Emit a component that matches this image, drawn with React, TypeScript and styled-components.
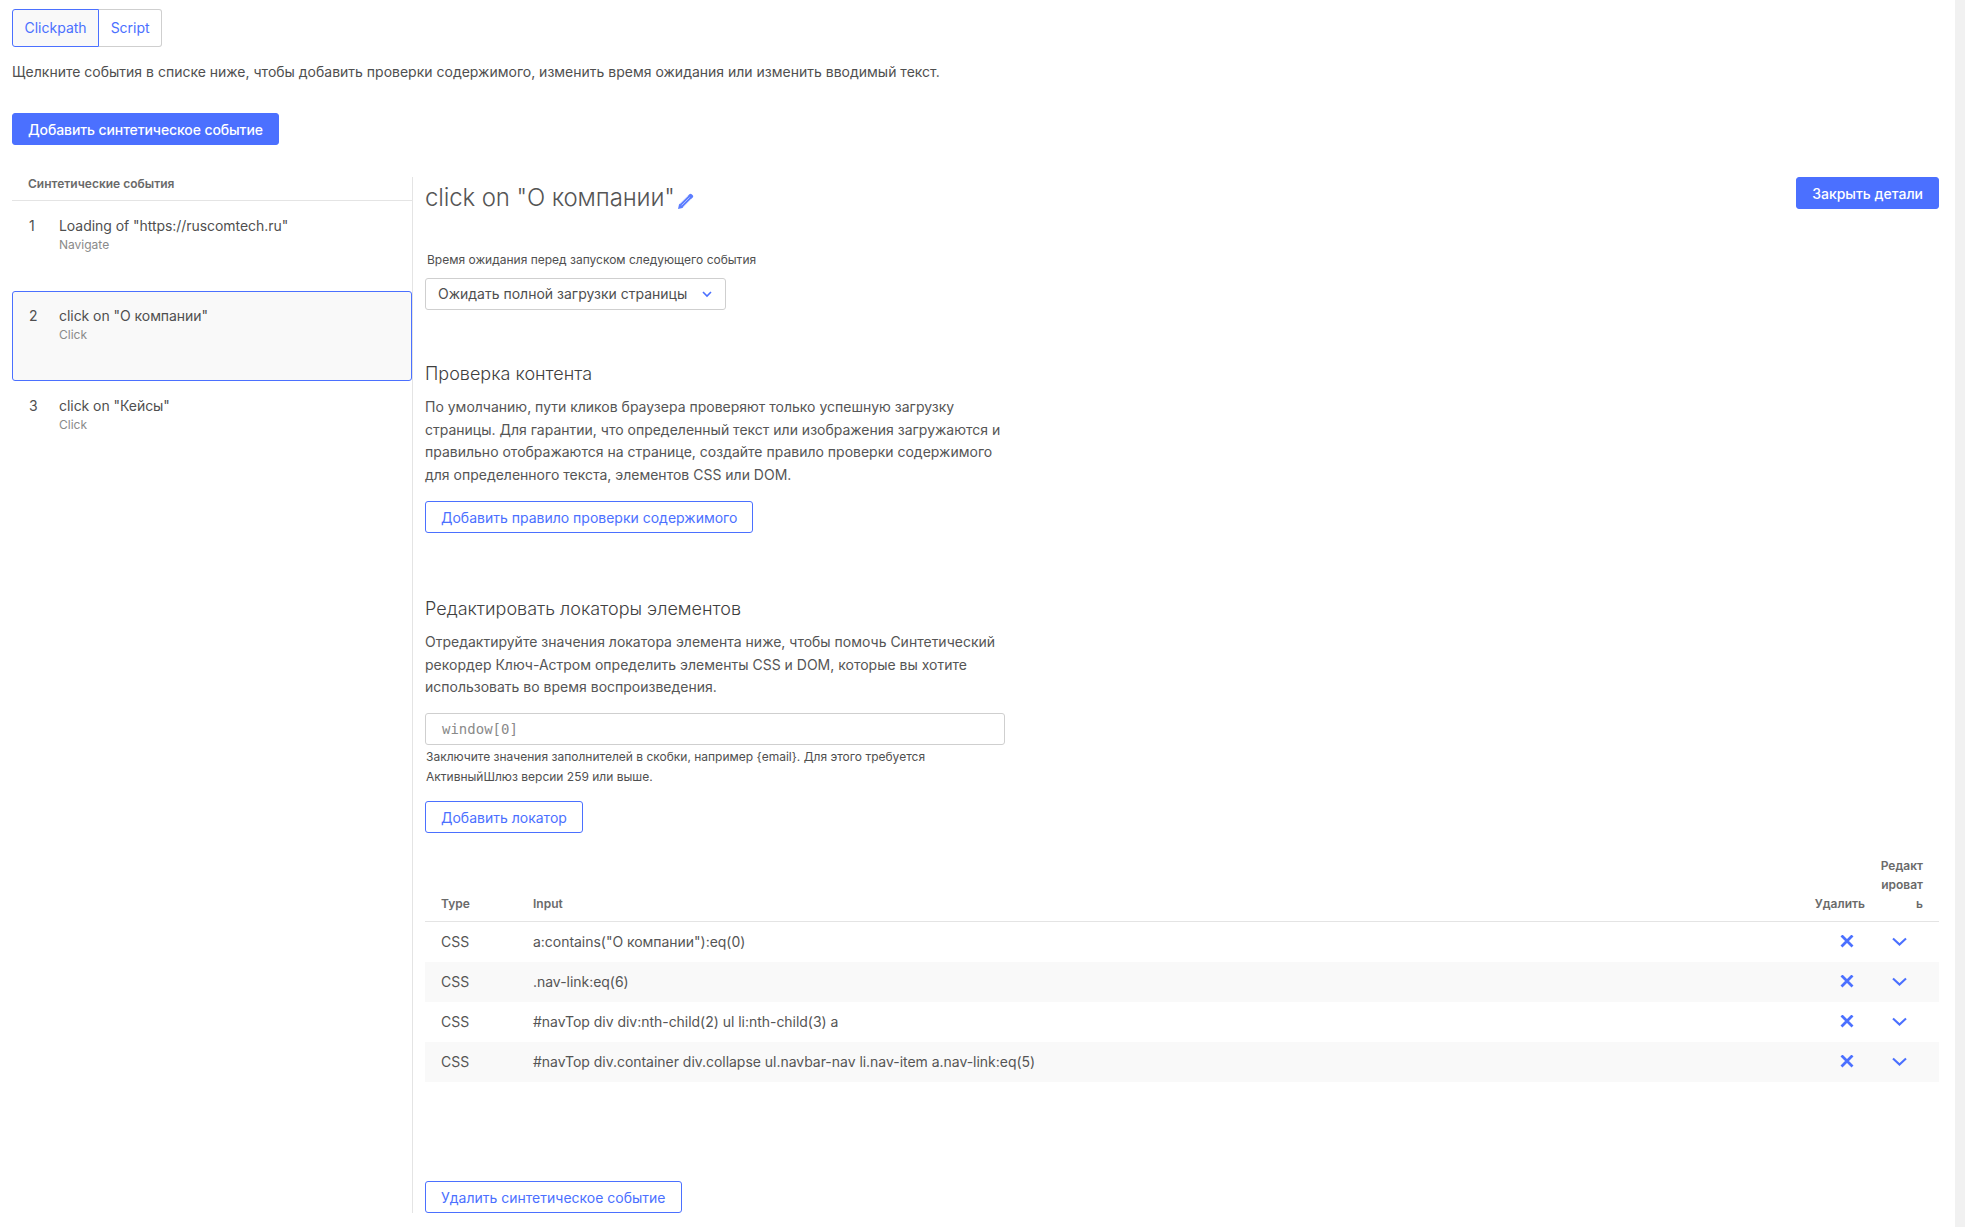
import React from "react";
import styled, { createGlobalStyle } from "styled-components";

const BLUE = "#4b70ff";
const TEXT = "#4f4f4f";

const Global = createGlobalStyle`
  html, body { margin: 0; padding: 0; background: #fff; }
  body { font-family: Inter, "Noto Sans", sans-serif; font-size: 14px; color: ${TEXT}; }
  * { box-sizing: border-box; }
`;

const Shell = styled.div`
  display: flex;
  width: 1965px;
  height: 1227px;
  overflow: hidden;
`;
const Main = styled.main`
  width: 1955px;
  padding: 9px 16px 0 12px;
  display: flex;
  flex-direction: column;
`;
const Gutter = styled.div`
  width: 10px;
  background: #f1f1f1;
`;
const Tabs = styled.div`
  display: flex;
`;
const Tab = styled.button<{ $active?: boolean }>`
  height: 38px;
  padding: 0 11.5px;
  font: 400 14px/20px Inter, sans-serif;
  color: ${BLUE};
  background: ${(p) => (p.$active ? "#f9f9f9" : "#fff")};
  border: 1px solid ${(p) => (p.$active ? BLUE : "#cfcfcf")};
  border-left-width: ${(p) => (p.$active ? 1 : 0)}px;
  border-radius: ${(p) => (p.$active ? "3px 0 0 3px" : "0 3px 3px 0")};
`;
const Intro = styled.p`
  margin: 15px 0 0;
  font-size: 14px;
  line-height: 20px;
`;
const Button = styled.button<{ $outline?: boolean }>`
  align-self: flex-start;
  flex: none;
  height: 32px;
  padding: 1px 15px 0;
  font: 500 14px/20px Inter, sans-serif;
  font-weight: ${(p) => (p.$outline ? 400 : 500)};
  color: ${(p) => (p.$outline ? BLUE : "#fff")};
  background: ${(p) => (p.$outline ? "#fff" : BLUE)};
  border: 1px solid ${BLUE};
  border-radius: 3px;
  white-space: nowrap;
`;
const AddEvent = styled(Button)`
  margin-top: 31px;
  letter-spacing: -0.1px;
`;
const Columns = styled.div`
  display: flex;
  margin-top: 32px;
  height: 1036px;
`;
const EventList = styled.section`
  width: 400px;
  flex: none;
`;
const ListTitle = styled.div`
  height: 24px;
  padding: 0 16px;
  font-size: 12px;
  font-weight: 600;
  line-height: 13px;
  color: #6a6a6a;
  border-bottom: 1px solid #e4e4e4;
`;
const EventRow = styled.div<{ $selected?: boolean }>`
  display: flex;
  height: 90px;
  padding: 14px 16px;
  background: ${(p) => (p.$selected ? "#f9f9f9" : "#fff")};
  border: 1px solid ${(p) => (p.$selected ? BLUE : "transparent")};
  border-radius: 3px;
`;
const EventNum = styled.div`
  width: 30px;
  flex: none;
  line-height: 20px;
`;
const EventTitle = styled.div`
  line-height: 20px;
  letter-spacing: -0.05px;
`;
const EventSub = styled.div`
  font-size: 12px;
  line-height: 18px;
  color: #8a8a8a;
`;
const Detail = styled.section`
  flex: 1;
  min-width: 0;
  padding-left: 12px;
  border-left: 1px solid #e4e4e4;
  display: flex;
  flex-direction: column;
`;
const DetailHead = styled.div`
  display: flex;
  justify-content: space-between;
  height: 40px;
`;
const TitleRow = styled.div`
  display: flex;
  align-items: center;
`;
const Title = styled.h1`
  margin: 0;
  padding-top: 1px;
  font-size: 24px;
  font-weight: 300;
  line-height: 40px;
  letter-spacing: -0.12px;
  color: #555;
`;
const Pencil = styled.svg`
  width: 18px;
  height: 18px;
  margin: 7px 0 0 2px;
  color: ${BLUE};
`;
const FieldLabel = styled.label`
  margin: 35px 0 0 2px;
  font-size: 12px;
  line-height: 16px;
`;
const Select = styled.div`
  align-self: flex-start;
  width: 301px;
  height: 32px;
  margin-top: 10px;
  padding: 0 13px 1px 12px;
  display: flex;
  align-items: center;
  justify-content: space-between;
  border: 1px solid #cfcfcf;
  border-radius: 3px;
`;
const Heading = styled.h2<{ $gap: number }>`
  margin: ${(p) => p.$gap}px 0 0;
  font-size: 18px;
  font-weight: 300;
  line-height: 24px;
  color: #3f3f3f;
`;
const Para = styled.p`
  width: 580px;
  margin: 10px 0 0;
  font-size: 14px;
  line-height: 22.5px;
  color: #555;
`;
const BlockButton = styled(Button)<{ $gap: number }>`
  margin-top: ${(p) => p.$gap}px;
`;
const Input = styled.div`
  width: 580px;
  height: 32px;
  margin-top: 14.5px;
  padding-left: 16px;
  border: 1px solid #cfcfcf;
  border-radius: 3px;
  font: 14px/30px "DejaVu Sans Mono", monospace;
  color: #8a8a8a;
`;
const Help = styled.div`
  width: 520px;
  margin: 2px 0 0 1px;
  font-size: 12px;
  line-height: 20px;
`;
const Table = styled.table`
  width: 100%;
  margin-top: 23px;
  table-layout: fixed;
  border-collapse: collapse;
`;
const Th = styled.th<{ $w?: number; $right?: boolean; $pr?: number }>`
  ${(p) => (p.$w ? `width: ${p.$w}px;` : "")}
  padding: 0 ${(p) => p.$pr ?? 16}px 8px ${(p) => (p.$right ? 0 : 16)}px;
  text-align: ${(p) => (p.$right ? "right" : "left")};
  vertical-align: bottom;
  font-size: 12px;
  font-weight: 600;
  line-height: 19px;
  color: #6a6a6a;
  word-break: break-all;
  border-bottom: 1px solid #e4e4e4;
`;
const Tr = styled.tr`
  height: 40px;
  &:nth-child(even) {
    background: #f9f9f9;
  }
`;
const Td = styled.td<{ $iconPr?: number }>`
  padding: 0 ${(p) => p.$iconPr ?? 16}px 0 ${(p) => (p.$iconPr ? 0 : 16)}px;
  text-align: ${(p) => (p.$iconPr ? "right" : "left")};
  font-size: 14px;
  line-height: 20px;
  letter-spacing: -0.03px;
  white-space: nowrap;
  color: #555;
`;
const Icon = styled.svg<{ $w: number }>`
  display: block;
  width: ${(p) => p.$w}px;
  height: 14px;
  margin-left: auto;
  color: ${BLUE};
`;
const DeleteEvent = styled(Button)`
  margin-top: auto;
`;

const SmallChevron = styled.svg`
  width: 10px;
  height: 8px;
  color: ${BLUE};
`;

const rows = [
  'a:contains("О компании"):eq(0)',
  ".nav-link:eq(6)",
  "#navTop div div:nth-child(2) ul li:nth-child(3) a",
  "#navTop div.container div.collapse ul.navbar-nav li.nav-item a.nav-link:eq(5)",
];

const events = [
  { n: 1, t: 'Loading of "https://ruscomtech.ru"', s: "Navigate" },
  { n: 2, t: 'click on "О компании"', s: "Click", selected: true },
  { n: 3, t: 'click on "Кейсы"', s: "Click" },
];

export default function App() {
  return (
    <Shell>
      <Global />
      <Main>
        <Tabs>
          <Tab $active>Clickpath</Tab>
          <Tab>Script</Tab>
        </Tabs>
        <Intro>Щелкните события в списке ниже, чтобы добавить проверки содержимого, изменить время ожидания или изменить вводимый текст.</Intro>
        <AddEvent>Добавить синтетическое событие</AddEvent>
        <Columns>
          <EventList>
            <ListTitle>Синтетические события</ListTitle>
            {events.map((e) => (
              <EventRow key={e.n} $selected={e.selected}>
                <EventNum>{e.n}</EventNum>
                <div>
                  <EventTitle>{e.t}</EventTitle>
                  <EventSub>{e.s}</EventSub>
                </div>
              </EventRow>
            ))}
          </EventList>
          <Detail>
            <DetailHead>
              <TitleRow>
                <Title>click on "О компании"</Title>
                <Pencil viewBox="0 0 18 18" fill="currentColor" opacity="0.9">
                  <path d="M1 17l1-4.6L12.4 2.2c.8-.7 1.6-.7 2.3 0l1 1c.7.7.7 1.5 0 2.3L5.4 15.9 1 17z" />
                  <path d="M4.6 13.4l8-8M3.2 11.8l8-8M6.2 14.8l8-8" stroke="#fff" strokeWidth="0.5" />
                </Pencil>
              </TitleRow>
              <Button>Закрыть детали</Button>
            </DetailHead>
            <FieldLabel>Время ожидания перед запуском следующего события</FieldLabel>
            <Select>
              Ожидать полной загрузки страницы
              <SmallChevron viewBox="0 0 10 8" fill="none" stroke="currentColor" strokeWidth="1.6">
                <path d="M1 2l4 4 4-4" />
              </SmallChevron>
            </Select>
            <Heading $gap={52}>Проверка контента</Heading>
            <Para>
              По умолчанию, пути кликов браузера проверяют только успешную загрузку страницы. Для гарантии, что определенный текст или изображения загружаются и правильно отображаются на странице, создайте правило проверки содержимого для определенного текста, элементов CSS или DOM.
            </Para>
            <BlockButton $outline $gap={15}>Добавить правило проверки содержимого</BlockButton>
            <Heading $gap={64}>Редактировать локаторы элементов</Heading>
            <Para>
              Отредактируйте значения локатора элемента ниже, чтобы помочь Синтетический рекордер Ключ-Астром определить элементы CSS и DOM, которые вы хотите использовать во время воспроизведения.
            </Para>
            <Input>window[0]</Input>
            <Help>Заключите значения заполнителей в скобки, например {"{email}"}. Для этого требуется АктивныйШлюз версии 259 или выше.</Help>
            <BlockButton $outline $gap={14}>Добавить локатор</BlockButton>
            <Table>
              <thead>
                <tr>
                  <Th $w={92}>Type</Th>
                  <Th>Input</Th>
                  <Th $w={90} $right $pr={15}>Удалить</Th>
                  <Th $w={59} $right>Редактировать</Th>
                </tr>
              </thead>
              <tbody>
                {rows.map((r) => (
                  <Tr key={r}>
                    <Td>CSS</Td>
                    <Td>{r}</Td>
                    <Td $iconPr={26}>
                      <Icon $w={14} viewBox="0 0 14 14" fill="none" stroke="currentColor" strokeWidth="2.8">
                        <path d="M1.5.5l11 11M12.5.5l-11 11" />
                      </Icon>
                    </Td>
                    <Td $iconPr={32}>
                      <Icon $w={15} viewBox="0 0 15 14" fill="none" stroke="currentColor" strokeWidth="2.1">
                        <path d="M1 3.5l6.5 6 6.5-6" />
                      </Icon>
                    </Td>
                  </Tr>
                ))}
              </tbody>
            </Table>
            <DeleteEvent $outline>Удалить синтетическое событие</DeleteEvent>
          </Detail>
        </Columns>
      </Main>
      <Gutter />
    </Shell>
  );
}
